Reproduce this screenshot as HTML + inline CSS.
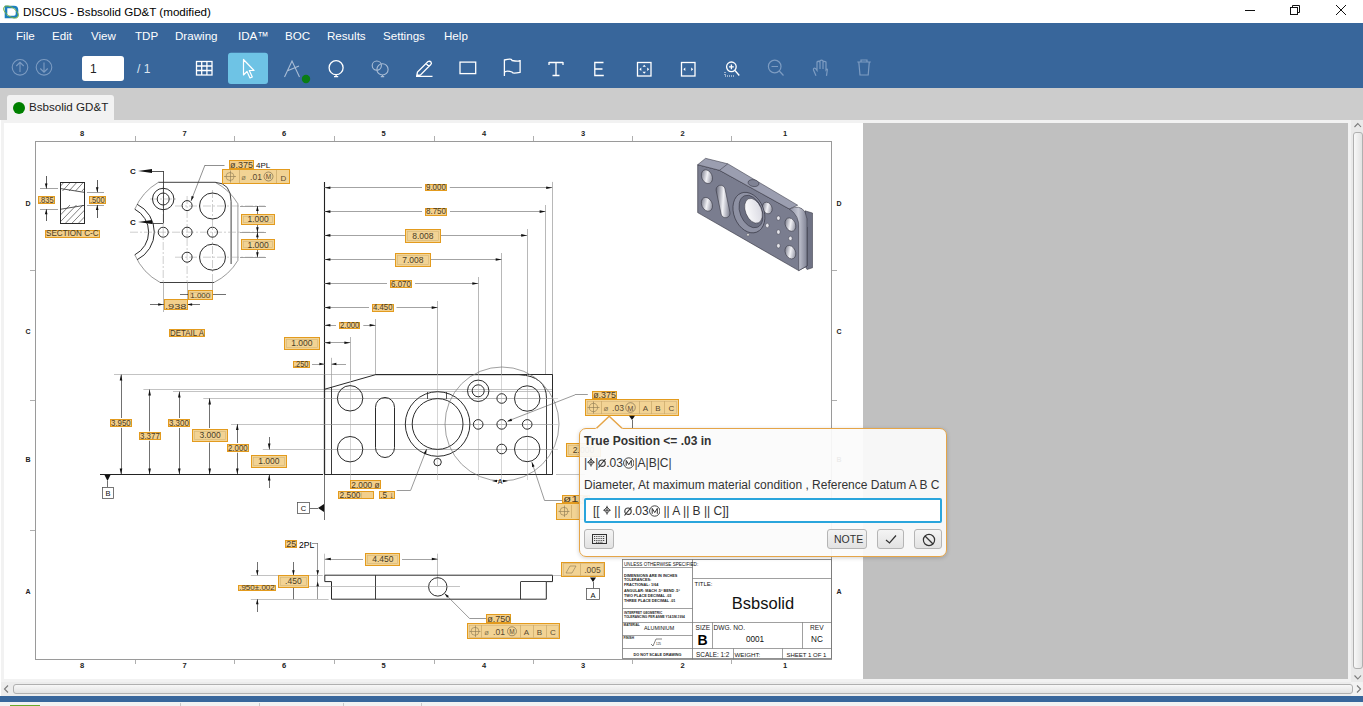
<!DOCTYPE html>
<html><head><meta charset="utf-8">
<style>
*{box-sizing:border-box;margin:0;padding:0}
html,body{width:1363px;height:706px;overflow:hidden;background:#fff;font-family:"Liberation Sans",sans-serif}
.abs{position:absolute}
#title{left:0;top:0;width:1363px;height:23px;background:#fff}
#title .t{left:23px;top:5px;font-size:11.6px;color:#000;white-space:nowrap}
#menu{left:0;top:23px;width:1363px;height:65px;background:#38669b}
.mi{position:absolute;top:6px;font-size:11.6px;color:#fff;white-space:nowrap}
#tabs{left:0;top:88px;width:1363px;height:32px;background:#cccccc}
#tab{left:7px;top:95px;width:107px;height:25px;background:#f2f2f2;border-radius:3px 3px 0 0}
#tab .d{left:6px;top:7px;width:12px;height:12px;border-radius:50%;background:#008000}
#tab .t{left:22px;top:5px;font-size:11.6px;color:#222;white-space:nowrap}
#panel{left:1px;top:120px;width:1362px;height:576px;background:#f2f2f2}
#canvas{left:4px;top:123px;width:859px;height:556px;background:#fff}
#grey{left:863px;top:123px;width:485px;height:556px;background:#c0c0c0}
#blue2{left:0;top:696px;width:1363px;height:6px;background:#38669b}
#bot{left:0;top:702px;width:1363px;height:4px;background:#f2f2f2}
#draw{left:0;top:0}
#draw text{font-family:"Liberation Sans",sans-serif}
#pop{left:579px;top:427.5px;width:368px;height:129px;background:rgba(251,251,251,0.93);border:1.5px solid #e5a548;border-radius:7px;box-shadow:0 1px 4px rgba(0,0,0,0.18)}
#pop .l1{left:4px;top:5px;font-size:12px;font-weight:bold;color:#333;white-space:nowrap}
#pop .l2{left:4px;top:27px;font-size:12px;color:#333;white-space:nowrap}
#pop .l3{left:4px;top:49px;font-size:12px;color:#333;white-space:nowrap}
#pop .inp{left:4px;top:69px;width:358px;height:25px;background:#fff;border:2px solid #2aa5dc;border-radius:2px}
#pop .inp span{position:absolute;left:7px;top:4px;font-size:12px;color:#333;white-space:nowrap}
.btn{position:absolute;top:100px;height:20px;background:linear-gradient(#f4f4f4,#e2e2e2);border:1px solid #b5b5b5;border-radius:3px}
</style></head><body>
<div id="title" class="abs">
  <svg class="abs" style="left:2px;top:3px" width="18" height="18" viewBox="0 0 18 18"><path d="M4,4 H12 Q15,4 15,7 V11 Q15,14 12,14 H4 Z" fill="none" stroke="#1d7fbf" stroke-width="2.6"/><ellipse cx="9" cy="9" rx="8.5" ry="4.5" transform="rotate(35 9 9)" fill="none" stroke="#7ab33e" stroke-width="0.9"/></svg>
  <div class="abs t">DISCUS - Bsbsolid GD&amp;T (modified)</div>
  <svg class="abs" style="left:0;top:0" width="1363" height="23" viewBox="0 0 1363 23"><g fill="none" stroke="#111" stroke-width="1">
  <path d="M1245,10.5 H1255"/>
  <rect x="1290.5" y="7.5" width="7" height="7"/>
  <path d="M1292.5,7.5 V5.5 H1299.5 V12.5 H1297.5"/>
  <path d="M1336,5 L1346,15 M1346,5 L1336,15"/>
  </g></svg>
</div>
<div id="menu" class="abs">
  <span class="mi" style="left:16px">File</span>
  <span class="mi" style="left:52px">Edit</span>
  <span class="mi" style="left:91px">View</span>
  <span class="mi" style="left:135px">TDP</span>
  <span class="mi" style="left:175px">Drawing</span>
  <span class="mi" style="left:238px">IDA™</span>
  <span class="mi" style="left:285px">BOC</span>
  <span class="mi" style="left:327px">Results</span>
  <span class="mi" style="left:383px">Settings</span>
  <span class="mi" style="left:444px">Help</span>
</div>

<svg class="abs" style="left:0;top:23px" width="1363" height="65" viewBox="0 23 1363 65">
<g fill="none" stroke="#7d9cc2" stroke-width="1.1">
 <circle cx="20" cy="67.3" r="7.8"/><path d="M20,72 V62.5 M16.3,66 L20,62.3 L23.7,66"/>
 <circle cx="44" cy="67.3" r="7.8"/><path d="M44,62.5 V72 M40.3,68.5 L44,72.2 L47.7,68.5"/>
</g>
<rect x="82" y="56" width="42" height="25" rx="3" fill="#fff"/>
<text x="90" y="73" font-size="12" fill="#222" font-family="Liberation Sans">1</text>
<text x="137" y="73" font-size="12" fill="#dde6f0" font-family="Liberation Sans">/ 1</text>
<g fill="none" stroke="#fff" stroke-width="1.3">
 <rect x="196.5" y="61.5" width="15.5" height="13.5"/>
 <path d="M196.5,66 H212 M196.5,70.5 H212 M201.7,61.5 V75 M206.9,61.5 V75"/>
</g>
<rect x="228" y="52.7" width="40" height="31.3" rx="3" fill="#6ec3e5"/>
<path d="M243.5,59.5 L243.5,75 L247,71.5 L250,78 L252.3,77 L249.3,70.5 L254,70.5 Z" fill="#6ec3e5" stroke="#fff" stroke-width="1.2" stroke-linejoin="round"/>
<g fill="none" stroke="#a9bdd6" stroke-width="1.1">
 <path d="M284.5,77 L292,61 L299.5,77 M287,71 L299,66"/>
</g>
<circle cx="306" cy="79" r="4.2" fill="#0a7d14"/>
<g fill="none" stroke="#fff" stroke-width="1.3">
 <circle cx="336.1" cy="67.7" r="7"/><path d="M336.1,74.7 V76.6 M334,76.6 H338.2"/>
</g><g fill="none" stroke="#a9bdd6" stroke-width="1.1">
 <circle cx="376.8" cy="65.6" r="4.6"/><circle cx="382.5" cy="69.4" r="5.6"/><path d="M382.5,75 V76.6 M380.8,76.6 H384.2"/>
</g><g fill="none" stroke="#fff" stroke-width="1.3">
 <rect x="460" y="62.1" width="15.7" height="11.5"/>
 <path d="M416.8,75.5 L417.5,72 L428,61.5 Q430,60.8 431,62 Q432,63.5 430.8,64.5 L420.5,75 Z M426,63.5 L429,66.5 M416,76.3 H432.5"/>
 <path d="M504.4,76 V60 Q512,58 512,60.5 Q520,62 520.1,60 V72.3 Q512,74 512,72 Q506,70 504.4,72.3"/>
 <path d="M549,62.5 H563 M549,62 V65 M563,62 V65 M556,62.5 V75.5 M552.5,75.5 H559.5"/>
 <path d="M603.5,62.5 H594.8 V75.5 H603.8 M594.8,69 H602.5"/>
 <rect x="637.5" y="62.5" width="13.5" height="13.5"/>
 <rect x="681.5" y="62.5" width="13.5" height="13.5"/>
 <circle cx="731.4" cy="66.8" r="4.8"/><path d="M729,66.8 H733.8 M731.4,64.4 V69.2 M735,70.5 L739.3,75.5"/>
</g>
<g fill="#fff"><path d="M642.5,66.8 H646 L644.2,64.8 Z M642.5,71.7 H646 L644.2,73.7 Z M641.3,67.5 V71 L639.3,69.2 Z M647.2,67.5 V71 L649.2,69.2 Z"/>
<path d="M685.3,67.5 V71 L683.3,69.2 Z M691.2,67.5 V71 L693.2,69.2 Z"/></g>
<path d="M725,76 H735 M725,72 V76" stroke="#fff" stroke-width="1" stroke-dasharray="1,1" fill="none"/>
<g fill="none" stroke="#7d9cc2" stroke-width="1.2">
 <circle cx="774.7" cy="66.5" r="6.3"/><path d="M771.5,66.5 H778 M779.3,71 L783.5,75.5"/>
 <path d="M816,75.8 L813.5,70 Q813,67.5 815.5,68.5 L817,70.5 V62 Q818.5,60.5 820,62 V69 V60.8 Q821.5,59.5 823,60.8 V69 V62 Q824.5,60.8 826,62 V70 Q827.5,68 827.3,70 L826.5,75.8"/>
 <path d="M857.3,62 H870.8 M861,62 V60 H867 V62 M858.8,62 L860,75 H868.2 L869.3,62"/>
</g>
<g fill="none" stroke="#fff" stroke-width="1"></g>
</svg>

<div id="tabs" class="abs"></div>
<div id="tab" class="abs"><div class="abs d"></div><div class="abs t">Bsbsolid GD&amp;T</div></div>
<div id="panel" class="abs"></div>
<div id="canvas" class="abs"></div>
<div id="grey" class="abs"></div>
<div class="abs" style="left:1351px;top:120px;width:12px;height:562px;background:#e9e9e9"></div>
<div class="abs" style="left:1353px;top:132px;width:9.5px;height:537px;border:1px solid #b0b0b0;border-radius:3px;background:linear-gradient(90deg,#f8f8f8,#e2e2e2)"></div>
<div class="abs" style="left:1px;top:682px;width:1350px;height:14px;background:#ececec"></div>
<div class="abs" style="left:13px;top:684px;width:1339.5px;height:9.5px;border:1px solid #b0b0b0;border-radius:3px;background:linear-gradient(#f8f8f8,#e2e2e2)"></div>
<svg class="abs" style="left:0;top:0" width="1363" height="706" viewBox="0 0 1363 706">
<g fill="none" stroke="#7a7a7a" stroke-width="1.1">
<path d="M1354.5,127 L1357.8,123.5 L1361,127"/>
<path d="M1354.5,675.5 L1357.8,679 L1361,675.5"/>
<path d="M8,685.5 L4.5,689 L8,692.5"/>
<path d="M1357,685.5 L1360.5,689 L1357,692.5"/>
</g></svg>
<div id="blue2" class="abs"></div>
<div id="bot" class="abs"></div>
<div class="abs" style="left:10px;top:705px;width:30px;height:1px;background:#6aaa2a"></div>
<div class="abs" style="left:180px;top:703px;width:1px;height:3px;background:#c8c8c8"></div>
<div class="abs" style="left:259px;top:703px;width:1px;height:3px;background:#c8c8c8"></div>
<div class="abs" style="left:343px;top:703px;width:1px;height:3px;background:#c8c8c8"></div>
<div class="abs" style="left:421px;top:703px;width:1px;height:3px;background:#c8c8c8"></div>
<svg id="draw" class="abs" width="1363" height="706" viewBox="0 0 1363 706">
<rect x="35.5" y="141.5" width="796" height="518" fill="none" stroke="#9a9a9a" stroke-width="1" rx="0"/>
<text x="82" y="136" font-size="7.5" fill="#222" text-anchor="middle" font-weight="bold" >8</text>
<text x="82" y="668" font-size="7.5" fill="#222" text-anchor="middle" font-weight="bold" >8</text>
<text x="184.7" y="136" font-size="7.5" fill="#222" text-anchor="middle" font-weight="bold" >7</text>
<text x="184.7" y="668" font-size="7.5" fill="#222" text-anchor="middle" font-weight="bold" >7</text>
<text x="284" y="136" font-size="7.5" fill="#222" text-anchor="middle" font-weight="bold" >6</text>
<text x="284" y="668" font-size="7.5" fill="#222" text-anchor="middle" font-weight="bold" >6</text>
<text x="383.5" y="136" font-size="7.5" fill="#222" text-anchor="middle" font-weight="bold" >5</text>
<text x="383.5" y="668" font-size="7.5" fill="#222" text-anchor="middle" font-weight="bold" >5</text>
<text x="484" y="136" font-size="7.5" fill="#222" text-anchor="middle" font-weight="bold" >4</text>
<text x="484" y="668" font-size="7.5" fill="#222" text-anchor="middle" font-weight="bold" >4</text>
<text x="583" y="136" font-size="7.5" fill="#222" text-anchor="middle" font-weight="bold" >3</text>
<text x="583" y="668" font-size="7.5" fill="#222" text-anchor="middle" font-weight="bold" >3</text>
<text x="682.7" y="136" font-size="7.5" fill="#222" text-anchor="middle" font-weight="bold" >2</text>
<text x="682.7" y="668" font-size="7.5" fill="#222" text-anchor="middle" font-weight="bold" >2</text>
<text x="785" y="136" font-size="7.5" fill="#222" text-anchor="middle" font-weight="bold" >1</text>
<text x="785" y="668" font-size="7.5" fill="#222" text-anchor="middle" font-weight="bold" >1</text>
<line x1="135.5" y1="136" x2="135.5" y2="141.5" stroke="#9a9a9a" stroke-width="0.8"/>
<line x1="135.5" y1="659" x2="135.5" y2="664" stroke="#9a9a9a" stroke-width="0.8"/>
<line x1="234.5" y1="136" x2="234.5" y2="141.5" stroke="#9a9a9a" stroke-width="0.8"/>
<line x1="234.5" y1="659" x2="234.5" y2="664" stroke="#9a9a9a" stroke-width="0.8"/>
<line x1="334.5" y1="136" x2="334.5" y2="141.5" stroke="#9a9a9a" stroke-width="0.8"/>
<line x1="334.5" y1="659" x2="334.5" y2="664" stroke="#9a9a9a" stroke-width="0.8"/>
<line x1="434.5" y1="136" x2="434.5" y2="141.5" stroke="#9a9a9a" stroke-width="0.8"/>
<line x1="434.5" y1="659" x2="434.5" y2="664" stroke="#9a9a9a" stroke-width="0.8"/>
<line x1="533.5" y1="136" x2="533.5" y2="141.5" stroke="#9a9a9a" stroke-width="0.8"/>
<line x1="533.5" y1="659" x2="533.5" y2="664" stroke="#9a9a9a" stroke-width="0.8"/>
<line x1="632.5" y1="136" x2="632.5" y2="141.5" stroke="#9a9a9a" stroke-width="0.8"/>
<line x1="632.5" y1="659" x2="632.5" y2="664" stroke="#9a9a9a" stroke-width="0.8"/>
<line x1="731.5" y1="136" x2="731.5" y2="141.5" stroke="#9a9a9a" stroke-width="0.8"/>
<line x1="731.5" y1="659" x2="731.5" y2="664" stroke="#9a9a9a" stroke-width="0.8"/>
<text x="28" y="206" font-size="7" fill="#222" text-anchor="middle" font-weight="bold" >D</text>
<text x="839" y="206" font-size="7" fill="#222" text-anchor="middle" font-weight="bold" >D</text>
<text x="28" y="334" font-size="7" fill="#222" text-anchor="middle" font-weight="bold" >C</text>
<text x="839" y="334" font-size="7" fill="#222" text-anchor="middle" font-weight="bold" >C</text>
<text x="28" y="462" font-size="7" fill="#222" text-anchor="middle" font-weight="bold" >B</text>
<text x="839" y="462" font-size="7" fill="#222" text-anchor="middle" font-weight="bold" >B</text>
<text x="28" y="594" font-size="7" fill="#222" text-anchor="middle" font-weight="bold" >A</text>
<text x="839" y="594" font-size="7" fill="#222" text-anchor="middle" font-weight="bold" >A</text>
<line x1="30" y1="270.5" x2="35.5" y2="270.5" stroke="#9a9a9a" stroke-width="0.8"/>
<line x1="831.5" y1="270.5" x2="837" y2="270.5" stroke="#9a9a9a" stroke-width="0.8"/>
<line x1="30" y1="400.5" x2="35.5" y2="400.5" stroke="#9a9a9a" stroke-width="0.8"/>
<line x1="831.5" y1="400.5" x2="837" y2="400.5" stroke="#9a9a9a" stroke-width="0.8"/>
<line x1="30" y1="530.5" x2="35.5" y2="530.5" stroke="#9a9a9a" stroke-width="0.8"/>
<line x1="831.5" y1="530.5" x2="837" y2="530.5" stroke="#9a9a9a" stroke-width="0.8"/>
<rect x="60.5" y="182.5" width="24" height="41" fill="none" stroke="#2a2a2a" stroke-width="1" rx="0"/>
<polyline points="60.2,188.5 84.7,192.4" fill="none" stroke="#2a2a2a" stroke-width="0.8"/>
<polyline points="60.2,209.3 84.7,205.3" fill="none" stroke="#2a2a2a" stroke-width="0.8"/>
<clipPath id="secclip"><rect x="60.2" y="182.2" width="24.5" height="41.5"/></clipPath><g clip-path="url(#secclip)">
<line x1="56.0" y1="191" x2="64.0" y2="182.2" stroke="#2a2a2a" stroke-width="0.6"/>
<line x1="52.0" y1="223.7" x2="70.0" y2="205" stroke="#2a2a2a" stroke-width="0.6"/>
<line x1="62.5" y1="191" x2="70.5" y2="182.2" stroke="#2a2a2a" stroke-width="0.6"/>
<line x1="58.5" y1="223.7" x2="76.5" y2="205" stroke="#2a2a2a" stroke-width="0.6"/>
<line x1="69.0" y1="191" x2="77.0" y2="182.2" stroke="#2a2a2a" stroke-width="0.6"/>
<line x1="65.0" y1="223.7" x2="83.0" y2="205" stroke="#2a2a2a" stroke-width="0.6"/>
<line x1="75.5" y1="191" x2="83.5" y2="182.2" stroke="#2a2a2a" stroke-width="0.6"/>
<line x1="71.5" y1="223.7" x2="89.5" y2="205" stroke="#2a2a2a" stroke-width="0.6"/>
<line x1="82.0" y1="191" x2="90.0" y2="182.2" stroke="#2a2a2a" stroke-width="0.6"/>
<line x1="78.0" y1="223.7" x2="96.0" y2="205" stroke="#2a2a2a" stroke-width="0.6"/>
<line x1="88.5" y1="191" x2="96.5" y2="182.2" stroke="#2a2a2a" stroke-width="0.6"/>
<line x1="84.5" y1="223.7" x2="102.5" y2="205" stroke="#2a2a2a" stroke-width="0.6"/>
</g>
<line x1="40" y1="188.5" x2="58" y2="188.5" stroke="#8c8c8c" stroke-width="0.8"/>
<line x1="40" y1="209.5" x2="58" y2="209.5" stroke="#8c8c8c" stroke-width="0.8"/>
<line x1="46.5" y1="176" x2="46.5" y2="188.5" stroke="#333" stroke-width="0.8"/>
<polygon points="46.2,188.5 44.900000000000006,183.5 47.5,183.5" fill="#111"/>
<line x1="46.5" y1="209.3" x2="46.5" y2="221" stroke="#333" stroke-width="0.8"/>
<polygon points="46.2,209.3 47.5,214.3 44.900000000000006,214.3" fill="#111"/>
<line x1="87" y1="192.5" x2="104" y2="192.5" stroke="#8c8c8c" stroke-width="0.8"/>
<line x1="87" y1="205.5" x2="104" y2="205.5" stroke="#8c8c8c" stroke-width="0.8"/>
<line x1="97.5" y1="180" x2="97.5" y2="192.2" stroke="#333" stroke-width="0.8"/>
<polygon points="97.2,192.2 95.9,187.2 98.5,187.2" fill="#111"/>
<line x1="97.5" y1="205" x2="97.5" y2="218" stroke="#333" stroke-width="0.8"/>
<polygon points="97.2,205 98.5,210.0 95.9,210.0" fill="#111"/>
<rect x="38.5" y="196.5" width="16" height="7" fill="#f2cf8c" stroke="#e39b1e" stroke-width="1" rx="0"/>
<text x="46.35" y="202.60000000000002" font-size="8.6" fill="#4b3b1f" text-anchor="middle" font-weight="normal" textLength="14.700000000000003" lengthAdjust="spacingAndGlyphs">.835</text>
<rect x="89.5" y="196.5" width="16" height="7" fill="#f2cf8c" stroke="#e39b1e" stroke-width="1" rx="0"/>
<text x="97.35" y="202.60000000000002" font-size="8.6" fill="#4b3b1f" text-anchor="middle" font-weight="normal" textLength="14.700000000000003" lengthAdjust="spacingAndGlyphs">.500</text>
<rect x="45.5" y="230.5" width="54" height="7" fill="#f2cf8c" stroke="#e39b1e" stroke-width="1" rx="0"/>
<text x="72.3" y="236.3" font-size="8.6" fill="#4b3b1f" text-anchor="middle" font-weight="normal" textLength="52.599999999999994" lengthAdjust="spacingAndGlyphs">SECTION C-C</text>
<path d="M158.4,182.3 A57,57 0 0 0 134.8,209.2" fill="none" stroke="#555" stroke-width="0.6"/>
<path d="M134.8,254.8 A57,57 0 0 0 160,282.4" fill="none" stroke="#555" stroke-width="0.6"/>
<path d="M215.2,182.3 A57,57 0 0 1 237.9,203.8 L237.9,260.4 A57,57 0 0 1 214.1,282.4" fill="none" stroke="#555" stroke-width="0.6"/>
<path d="M158.4,182.3 L215.2,182.3 Q231.1,183 231.1,201.5 L231.1,264" fill="none" stroke="#2a2a2a" stroke-width="0.9"/>
<line x1="160" y1="282.5" x2="214.1" y2="282.5" stroke="#2a2a2a" stroke-width="0.9"/>
<path d="M134.8,209.2 A25.7,25.7 0 0 1 134.8,254.8" fill="none" stroke="#2a2a2a" stroke-width="1"/>
<path d="M137.2,204.3 A31,31 0 0 1 137.2,259.7" fill="none" stroke="#2a2a2a" stroke-width="1"/>
<line x1="175" y1="206" x2="265" y2="206" stroke="#9a9a9a" stroke-width="0.5" stroke-dasharray="8,2,2,2"/>
<line x1="130" y1="232.2" x2="265" y2="232.2" stroke="#9a9a9a" stroke-width="0.5" stroke-dasharray="8,2,2,2"/>
<line x1="175" y1="257.2" x2="265" y2="257.2" stroke="#9a9a9a" stroke-width="0.5" stroke-dasharray="8,2,2,2"/>
<line x1="150" y1="199" x2="177" y2="199" stroke="#9a9a9a" stroke-width="0.5" stroke-dasharray="8,2,2,2"/>
<line x1="163.5" y1="282" x2="163.5" y2="312" stroke="#888" stroke-width="0.6"/>
<line x1="163.2" y1="186" x2="163.2" y2="282" stroke="#9a9a9a" stroke-width="0.5" stroke-dasharray="8,2,2,2"/>
<line x1="187.5" y1="282" x2="187.5" y2="300" stroke="#888" stroke-width="0.6"/>
<line x1="187.1" y1="196" x2="187.1" y2="282" stroke="#9a9a9a" stroke-width="0.5" stroke-dasharray="8,2,2,2"/>
<line x1="212.5" y1="282" x2="212.5" y2="300" stroke="#888" stroke-width="0.6"/>
<line x1="212.5" y1="190" x2="212.5" y2="282" stroke="#9a9a9a" stroke-width="0.5" stroke-dasharray="8,2,2,2"/>
<circle cx="163.2" cy="199" r="10.7" fill="none" stroke="#2a2a2a" stroke-width="1"/>
<circle cx="163.2" cy="199" r="6" fill="none" stroke="#2a2a2a" stroke-width="1"/>
<circle cx="187.1" cy="205.6" r="5" fill="none" stroke="#2a2a2a" stroke-width="1"/>
<circle cx="212.5" cy="206" r="13" fill="none" stroke="#2a2a2a" stroke-width="1"/>
<circle cx="163.2" cy="232.2" r="5" fill="none" stroke="#2a2a2a" stroke-width="1"/>
<circle cx="187.1" cy="232.2" r="5" fill="none" stroke="#2a2a2a" stroke-width="1"/>
<circle cx="212.5" cy="232.2" r="5" fill="none" stroke="#2a2a2a" stroke-width="1"/>
<circle cx="187.1" cy="257.2" r="5" fill="none" stroke="#2a2a2a" stroke-width="1"/>
<circle cx="212.5" cy="257.2" r="13" fill="none" stroke="#2a2a2a" stroke-width="1"/>
<text x="133" y="174" font-size="8" fill="#111" text-anchor="middle" font-weight="bold" >C</text>
<polygon points="138,171 152,169 152,173" fill="#111"/>
<line x1="152" y1="171.5" x2="163.5" y2="171.5" stroke="#2a2a2a" stroke-width="0.8"/>
<line x1="163.5" y1="171" x2="163.5" y2="223" stroke="#2a2a2a" stroke-width="0.8"/>
<text x="133" y="225" font-size="8" fill="#111" text-anchor="middle" font-weight="bold" >C</text>
<polygon points="138,222 152,220 152,224" fill="#111"/>
<line x1="152" y1="223.5" x2="163.5" y2="223.5" stroke="#2a2a2a" stroke-width="0.8"/>
<line x1="240" y1="206.5" x2="266" y2="206.5" stroke="#8c8c8c" stroke-width="0.8"/>
<line x1="240" y1="232.5" x2="266" y2="232.5" stroke="#8c8c8c" stroke-width="0.8"/>
<line x1="240" y1="257.5" x2="266" y2="257.5" stroke="#8c8c8c" stroke-width="0.8"/>
<line x1="257.5" y1="206" x2="257.5" y2="257.2" stroke="#333" stroke-width="0.7"/>
<polygon points="257.4,206 258.7,211.0 256.09999999999997,211.0" fill="#111"/>
<polygon points="257.4,232.2 256.09999999999997,227.2 258.7,227.2" fill="#111"/>
<polygon points="257.4,232.2 258.7,237.2 256.09999999999997,237.2" fill="#111"/>
<polygon points="257.4,257.2 256.09999999999997,252.2 258.7,252.2" fill="#111"/>
<rect x="241.5" y="214.5" width="33" height="10" fill="#f2d394" stroke="#e39b1e" stroke-width="1" rx="0"/>
<rect x="243.5" y="216.5" width="29" height="6" fill="none" stroke="#d9b97a" stroke-width="0.7" rx="0"/>
<text x="258.1" y="222.3" font-size="8.5" fill="#4a3d25" text-anchor="middle" font-weight="normal" >1.000</text>
<rect x="241.5" y="239.5" width="33" height="10" fill="#f2d394" stroke="#e39b1e" stroke-width="1" rx="0"/>
<rect x="243.5" y="241.5" width="29" height="6" fill="none" stroke="#d9b97a" stroke-width="0.7" rx="0"/>
<text x="258.1" y="247.6" font-size="8.5" fill="#4a3d25" text-anchor="middle" font-weight="normal" >1.000</text>
<line x1="180" y1="294.5" x2="226" y2="294.5" stroke="#333" stroke-width="0.7"/>
<polygon points="187.1,294.5 192.1,293.2 192.1,295.8" fill="#111"/>
<polygon points="212.5,294.5 207.5,295.8 207.5,293.2" fill="#111"/>
<line x1="150" y1="304.5" x2="200" y2="304.5" stroke="#333" stroke-width="0.7"/>
<polygon points="163.2,304.5 158.2,305.8 158.2,303.2" fill="#111"/>
<polygon points="187.1,304.5 192.1,303.2 192.1,305.8" fill="#111"/>
<rect x="188.5" y="290.5" width="24" height="9" fill="#f2d394" stroke="#e39b1e" stroke-width="1" rx="0"/>
<rect x="190.5" y="292.5" width="20" height="5" fill="none" stroke="#d9b97a" stroke-width="0.7" rx="0"/>
<text x="200.25" y="297.75" font-size="8" fill="#4a3d25" text-anchor="middle" font-weight="normal" >1.000</text>
<rect x="164.5" y="299.5" width="23" height="10" fill="#f2cf8c" stroke="#e39b1e" stroke-width="1" rx="0"/>
<text x="175.75" y="308.8" font-size="8" fill="#4b3b1f" text-anchor="middle" font-weight="normal" textLength="21.5" lengthAdjust="spacingAndGlyphs">.938</text>
<rect x="169.5" y="329.5" width="35" height="7" fill="#f2cf8c" stroke="#e39b1e" stroke-width="1" rx="0"/>
<text x="187.0" y="335.8" font-size="8.6" fill="#4b3b1f" text-anchor="middle" font-weight="normal" textLength="34" lengthAdjust="spacingAndGlyphs">DETAIL A</text>
<line x1="224.5" y1="165.5" x2="205" y2="165.5" stroke="#444" stroke-width="0.6"/>
<line x1="205" y1="165" x2="191" y2="201" stroke="#444" stroke-width="0.6"/>
<polygon points="191,201 191.591,195.882 194.00900000000001,196.81799999999998" fill="#111"/>
<rect x="229.5" y="160.5" width="24" height="8" fill="#f2cf8c" stroke="#e39b1e" stroke-width="1" rx="0"/>
<text x="241.5" y="167.8" font-size="8.6" fill="#4b3b1f" text-anchor="middle" font-weight="normal" textLength="23" lengthAdjust="spacingAndGlyphs">ø.375</text>
<text x="256" y="168" font-size="8" fill="#111" text-anchor="start" font-weight="normal" >4PL</text>
<rect x="222.5" y="169.5" width="67" height="14" fill="#f2d394" stroke="#e39b1e" stroke-width="1" rx="0"/>
<line x1="239.5" y1="170" x2="239.5" y2="183" stroke="#c9a868" stroke-width="0.7"/>
<line x1="276.5" y1="170" x2="276.5" y2="183" stroke="#c9a868" stroke-width="0.7"/>
<circle cx="230" cy="176.5" r="4" fill="none" stroke="#8a7750" stroke-width="0.6"/>
<line x1="224" y1="176.5" x2="236" y2="176.5" stroke="#8a7750" stroke-width="0.6"/>
<line x1="230.5" y1="170.5" x2="230.5" y2="182.5" stroke="#8a7750" stroke-width="0.6"/>
<text x="243.5" y="180" font-size="7.5" fill="#8a7750" text-anchor="middle" font-weight="normal" >ø</text>
<text x="256" y="180" font-size="8.5" fill="#5a4a30" text-anchor="middle" font-weight="normal" >.01</text>
<circle cx="268.5" cy="176.5" r="4.5" fill="none" stroke="#6a5a40" stroke-width="0.6"/>
<text x="268.5" y="179.3" font-size="6.5" fill="#5a4a30" text-anchor="middle" font-weight="normal" >M</text>
<text x="283.5" y="180.5" font-size="8" fill="#5a4a30" text-anchor="middle" font-weight="normal" >D</text>
<line x1="324.5" y1="181.9" x2="324.5" y2="474.4" stroke="#222" stroke-width="1.1"/>
<line x1="552.5" y1="181.9" x2="552.5" y2="375" stroke="#9a9a9a" stroke-width="0.7"/>
<line x1="324.4" y1="187.5" x2="422" y2="187.5" stroke="#8c8c8c" stroke-width="0.8"/>
<line x1="449.8" y1="187.5" x2="552.2" y2="187.5" stroke="#8c8c8c" stroke-width="0.8"/>
<rect x="425.5" y="184.5" width="21" height="6" fill="#f2cf8c" stroke="#e39b1e" stroke-width="1" rx="0"/>
<text x="435.9" y="190.20000000000002" font-size="8.164999999999992" fill="#4b3b1f" text-anchor="middle" font-weight="normal" textLength="19.80000000000001" lengthAdjust="spacingAndGlyphs">9.000</text>
<polygon points="324.4,187.8 330.4,186.5 330.4,189.10000000000002" fill="#111"/>
<polygon points="552.2,187.8 546.2,189.10000000000002 546.2,186.5" fill="#111"/>
<line x1="545.5" y1="205" x2="545.5" y2="375" stroke="#9a9a9a" stroke-width="0.7"/>
<line x1="324.4" y1="211.5" x2="422" y2="211.5" stroke="#8c8c8c" stroke-width="0.8"/>
<line x1="450" y1="211.5" x2="545.6" y2="211.5" stroke="#8c8c8c" stroke-width="0.8"/>
<rect x="425.5" y="208.5" width="21" height="7" fill="#f2cf8c" stroke="#e39b1e" stroke-width="1" rx="0"/>
<text x="436.0" y="214.3" font-size="8.6" fill="#4b3b1f" text-anchor="middle" font-weight="normal" textLength="20" lengthAdjust="spacingAndGlyphs">8.750</text>
<polygon points="324.4,211.6 330.4,210.29999999999998 330.4,212.9" fill="#111"/>
<polygon points="545.6,211.6 539.6,212.9 539.6,210.29999999999998" fill="#111"/>
<line x1="527.5" y1="229" x2="527.5" y2="375" stroke="#9a9a9a" stroke-width="0.7"/>
<line x1="324.4" y1="235.5" x2="405" y2="235.5" stroke="#8c8c8c" stroke-width="0.8"/>
<line x1="440.6" y1="235.5" x2="527.2" y2="235.5" stroke="#8c8c8c" stroke-width="0.8"/>
<rect x="405.5" y="229.5" width="35" height="13" fill="#f2d394" stroke="#e39b1e" stroke-width="1" rx="0"/>
<rect x="407.5" y="231.5" width="31" height="9" fill="none" stroke="#d9b97a" stroke-width="0.7" rx="0"/>
<text x="422.8" y="238.85" font-size="8.5" fill="#4a3d25" text-anchor="middle" font-weight="normal" >8.008</text>
<polygon points="324.4,235.4 330.4,234.1 330.4,236.70000000000002" fill="#111"/>
<polygon points="527.2,235.4 521.2,236.70000000000002 521.2,234.1" fill="#111"/>
<line x1="501.5" y1="253" x2="501.5" y2="375" stroke="#9a9a9a" stroke-width="0.7"/>
<line x1="324.4" y1="259.5" x2="395" y2="259.5" stroke="#8c8c8c" stroke-width="0.8"/>
<line x1="430.7" y1="259.5" x2="501.7" y2="259.5" stroke="#8c8c8c" stroke-width="0.8"/>
<rect x="395.5" y="253.5" width="35" height="13" fill="#f2d394" stroke="#e39b1e" stroke-width="1" rx="0"/>
<rect x="397.5" y="255.5" width="31" height="9" fill="none" stroke="#d9b97a" stroke-width="0.7" rx="0"/>
<text x="412.85" y="262.95" font-size="8.5" fill="#4a3d25" text-anchor="middle" font-weight="normal" >7.008</text>
<polygon points="324.4,259.5 330.4,258.2 330.4,260.8" fill="#111"/>
<polygon points="501.7,259.5 495.7,260.8 495.7,258.2" fill="#111"/>
<line x1="478.5" y1="277" x2="478.5" y2="375" stroke="#9a9a9a" stroke-width="0.7"/>
<line x1="324.4" y1="283.5" x2="387" y2="283.5" stroke="#8c8c8c" stroke-width="0.8"/>
<line x1="415" y1="283.5" x2="478.3" y2="283.5" stroke="#8c8c8c" stroke-width="0.8"/>
<rect x="390.5" y="280.5" width="21" height="7" fill="#f2cf8c" stroke="#e39b1e" stroke-width="1" rx="0"/>
<text x="401.0" y="286.6" font-size="8.6" fill="#4b3b1f" text-anchor="middle" font-weight="normal" textLength="20" lengthAdjust="spacingAndGlyphs">6.070</text>
<polygon points="324.4,283.5 330.4,282.2 330.4,284.8" fill="#111"/>
<polygon points="478.3,283.5 472.3,284.8 472.3,282.2" fill="#111"/>
<line x1="437.5" y1="301" x2="437.5" y2="375" stroke="#9a9a9a" stroke-width="0.7"/>
<line x1="324.4" y1="307.5" x2="369" y2="307.5" stroke="#8c8c8c" stroke-width="0.8"/>
<line x1="396.5" y1="307.5" x2="437.7" y2="307.5" stroke="#8c8c8c" stroke-width="0.8"/>
<rect x="372.5" y="304.5" width="21" height="7" fill="#f2cf8c" stroke="#e39b1e" stroke-width="1" rx="0"/>
<text x="382.75" y="310.40000000000003" font-size="8.6" fill="#4b3b1f" text-anchor="middle" font-weight="normal" textLength="19.5" lengthAdjust="spacingAndGlyphs">4.450</text>
<polygon points="324.4,307.6 330.4,306.3 330.4,308.90000000000003" fill="#111"/>
<polygon points="437.7,307.6 431.7,308.90000000000003 431.7,306.3" fill="#111"/>
<line x1="375.5" y1="319" x2="375.5" y2="375" stroke="#9a9a9a" stroke-width="0.7"/>
<line x1="324.4" y1="325.5" x2="336" y2="325.5" stroke="#8c8c8c" stroke-width="0.8"/>
<line x1="363.3" y1="325.5" x2="375.6" y2="325.5" stroke="#8c8c8c" stroke-width="0.8"/>
<rect x="339.5" y="322.5" width="20" height="6" fill="#f2cf8c" stroke="#e39b1e" stroke-width="1" rx="0"/>
<text x="349.65" y="328.2" font-size="8.6" fill="#4b3b1f" text-anchor="middle" font-weight="normal" textLength="19.30000000000001" lengthAdjust="spacingAndGlyphs">2.000</text>
<polygon points="324.4,325.2 330.4,323.9 330.4,326.5" fill="#111"/>
<polygon points="375.6,325.2 369.6,326.5 369.6,323.9" fill="#111"/>
<line x1="350.5" y1="337" x2="350.5" y2="380" stroke="#9a9a9a" stroke-width="0.7"/>
<line x1="324.4" y1="342.5" x2="350.4" y2="342.5" stroke="#8c8c8c" stroke-width="0.8"/>
<polygon points="324.4,342.7 330.4,341.4 330.4,344.0" fill="#111"/>
<polygon points="350.4,342.7 344.4,344.0 344.4,341.4" fill="#111"/>
<rect x="284.5" y="337.5" width="35" height="12" fill="#f2d394" stroke="#e39b1e" stroke-width="1" rx="0"/>
<rect x="286.5" y="339.5" width="31" height="8" fill="none" stroke="#d9b97a" stroke-width="0.7" rx="0"/>
<text x="301.85" y="346.45" font-size="8.5" fill="#4a3d25" text-anchor="middle" font-weight="normal" >1.000</text>
<line x1="331.5" y1="357.8" x2="331.5" y2="474.4" stroke="#888" stroke-width="0.6"/>
<line x1="312" y1="364.5" x2="324.4" y2="364.5" stroke="#8c8c8c" stroke-width="0.8"/>
<polygon points="324.4,364 319.4,365.3 319.4,362.7" fill="#111"/>
<line x1="331.4" y1="364.5" x2="346" y2="364.5" stroke="#8c8c8c" stroke-width="0.8"/>
<polygon points="331.4,364 336.4,362.7 336.4,365.3" fill="#111"/>
<rect x="293.5" y="361.5" width="16" height="6" fill="#f2cf8c" stroke="#e39b1e" stroke-width="1" rx="0"/>
<text x="301.25" y="367.0" font-size="8.509999999999973" fill="#4b3b1f" text-anchor="middle" font-weight="normal" textLength="14.5" lengthAdjust="spacingAndGlyphs">.250</text>
<line x1="100" y1="474.5" x2="323" y2="474.5" stroke="#222" stroke-width="1.2"/>
<line x1="114" y1="374.5" x2="553" y2="374.5" stroke="#9a9a9a" stroke-width="0.6"/>
<line x1="121.5" y1="374.6" x2="121.5" y2="418" stroke="#333" stroke-width="0.7"/>
<line x1="121.5" y1="427.9" x2="121.5" y2="474.4" stroke="#333" stroke-width="0.7"/>
<polygon points="121,374.6 122.3,380.6 119.7,380.6" fill="#111"/>
<polygon points="121,474.4 119.7,468.4 122.3,468.4" fill="#111"/>
<rect x="110.5" y="419.5" width="21" height="7" fill="#f2cf8c" stroke="#e39b1e" stroke-width="1" rx="0"/>
<text x="120.85" y="425.7" font-size="8.6" fill="#4b3b1f" text-anchor="middle" font-weight="normal" textLength="19.69999999999999" lengthAdjust="spacingAndGlyphs">3.950</text>
<line x1="143.4" y1="389.5" x2="553" y2="389.5" stroke="#9a9a9a" stroke-width="0.6"/>
<line x1="149.5" y1="389.5" x2="149.5" y2="431.4" stroke="#333" stroke-width="0.7"/>
<line x1="149.5" y1="440.8" x2="149.5" y2="474.4" stroke="#333" stroke-width="0.7"/>
<polygon points="149.6,389.5 150.9,395.5 148.29999999999998,395.5" fill="#111"/>
<polygon points="149.6,474.4 148.29999999999998,468.4 150.9,468.4" fill="#111"/>
<rect x="139.5" y="432.5" width="21" height="7" fill="#f2cf8c" stroke="#e39b1e" stroke-width="1" rx="0"/>
<text x="149.9" y="438.6" font-size="8.510000000000039" fill="#4b3b1f" text-anchor="middle" font-weight="normal" textLength="19.80000000000001" lengthAdjust="spacingAndGlyphs">3.377</text>
<line x1="173" y1="391.5" x2="553" y2="391.5" stroke="#9a9a9a" stroke-width="0.6"/>
<line x1="179.5" y1="391.6" x2="179.5" y2="418" stroke="#333" stroke-width="0.7"/>
<line x1="179.5" y1="428" x2="179.5" y2="474.4" stroke="#333" stroke-width="0.7"/>
<polygon points="179.3,391.6 180.60000000000002,397.6 178.0,397.6" fill="#111"/>
<polygon points="179.3,474.4 178.0,468.4 180.60000000000002,468.4" fill="#111"/>
<rect x="168.5" y="419.5" width="21" height="7" fill="#f2cf8c" stroke="#e39b1e" stroke-width="1" rx="0"/>
<text x="178.95" y="425.8" font-size="8.6" fill="#4b3b1f" text-anchor="middle" font-weight="normal" textLength="20.099999999999994" lengthAdjust="spacingAndGlyphs">3.300</text>
<line x1="203.3" y1="398.5" x2="553" y2="398.5" stroke="#9a9a9a" stroke-width="0.6"/>
<line x1="209.5" y1="398.4" x2="209.5" y2="428" stroke="#333" stroke-width="0.7"/>
<line x1="209.5" y1="442.5" x2="209.5" y2="474.4" stroke="#333" stroke-width="0.7"/>
<polygon points="209.7,398.4 211.0,404.4 208.39999999999998,404.4" fill="#111"/>
<polygon points="209.7,474.4 208.39999999999998,468.4 211.0,468.4" fill="#111"/>
<rect x="192.5" y="429.5" width="35" height="12" fill="#f2d394" stroke="#e39b1e" stroke-width="1" rx="0"/>
<rect x="194.5" y="431.5" width="31" height="8" fill="none" stroke="#d9b97a" stroke-width="0.7" rx="0"/>
<text x="210.05" y="438.25" font-size="8.5" fill="#4a3d25" text-anchor="middle" font-weight="normal" >3.000</text>
<line x1="231" y1="424.5" x2="553" y2="424.5" stroke="#9a9a9a" stroke-width="0.6"/>
<line x1="237.5" y1="424.1" x2="237.5" y2="443" stroke="#333" stroke-width="0.7"/>
<line x1="237.5" y1="452.7" x2="237.5" y2="474.4" stroke="#333" stroke-width="0.7"/>
<polygon points="237.3,424.1 238.60000000000002,430.1 236.0,430.1" fill="#111"/>
<polygon points="237.3,474.4 236.0,468.4 238.60000000000002,468.4" fill="#111"/>
<rect x="227.5" y="444.5" width="21" height="7" fill="#f2cf8c" stroke="#e39b1e" stroke-width="1" rx="0"/>
<text x="237.8" y="450.5" font-size="8.6" fill="#4b3b1f" text-anchor="middle" font-weight="normal" textLength="19.599999999999994" lengthAdjust="spacingAndGlyphs">2.000</text>
<line x1="262.8" y1="449.5" x2="553" y2="449.5" stroke="#9a9a9a" stroke-width="0.6"/>
<line x1="269.5" y1="437" x2="269.5" y2="449.4" stroke="#333" stroke-width="0.7"/>
<polygon points="269.2,449.4 267.9,443.4 270.5,443.4" fill="#111"/>
<line x1="269.5" y1="474.4" x2="269.5" y2="488" stroke="#333" stroke-width="0.7"/>
<polygon points="269.2,474.4 270.5,480.4 267.9,480.4" fill="#111"/>
<rect x="251.5" y="455.5" width="35" height="12" fill="#f2d394" stroke="#e39b1e" stroke-width="1" rx="0"/>
<rect x="253.5" y="457.5" width="31" height="8" fill="none" stroke="#d9b97a" stroke-width="0.7" rx="0"/>
<text x="268.9" y="464.45000000000005" font-size="8.5" fill="#4a3d25" text-anchor="middle" font-weight="normal" >1.000</text>
<polygon points="104.5,475 110.5,475 107.5,481" fill="#111"/>
<line x1="107.5" y1="481" x2="107.5" y2="487" stroke="#333" stroke-width="0.7"/>
<rect x="102.5" y="487.5" width="11" height="11" fill="#fff" stroke="#555" stroke-width="0.8" rx="0"/>
<text x="108" y="496" font-size="7.5" fill="#111" text-anchor="middle" font-weight="normal" >B</text>
<path d="M324.4,389.3 L375.5,374.7 L519,374.7 Q546.5,376 546.5,398.4" fill="none" stroke="#2a2a2a" stroke-width="1"/>
<line x1="324.5" y1="374.7" x2="324.5" y2="474.4" stroke="#2a2a2a" stroke-width="1.2"/>
<line x1="331.5" y1="387" x2="331.5" y2="474.4" stroke="#2a2a2a" stroke-width="0.9"/>
<line x1="324.4" y1="474.5" x2="552.7" y2="474.5" stroke="#2a2a2a" stroke-width="1"/>
<line x1="375.5" y1="374.5" x2="552.7" y2="374.5" stroke="#2a2a2a" stroke-width="1"/>
<line x1="552.5" y1="374.7" x2="552.5" y2="474.4" stroke="#2a2a2a" stroke-width="1"/>
<line x1="546.5" y1="398.4" x2="546.5" y2="474.4" stroke="#2a2a2a" stroke-width="0.9"/>
<line x1="320" y1="398.5" x2="558" y2="398.5" stroke="#aaa" stroke-width="0.5"/>
<line x1="320" y1="424.5" x2="558" y2="424.5" stroke="#aaa" stroke-width="0.5"/>
<line x1="320" y1="449.5" x2="558" y2="449.5" stroke="#aaa" stroke-width="0.5"/>
<line x1="462" y1="391.5" x2="494" y2="391.5" stroke="#aaa" stroke-width="0.5"/>
<line x1="350.5" y1="370" x2="350.5" y2="480" stroke="#aaa" stroke-width="0.5"/>
<line x1="437.5" y1="370" x2="437.5" y2="480" stroke="#aaa" stroke-width="0.5"/>
<line x1="478.5" y1="370" x2="478.5" y2="480" stroke="#aaa" stroke-width="0.5"/>
<line x1="501.5" y1="370" x2="501.5" y2="480" stroke="#aaa" stroke-width="0.5"/>
<line x1="527.5" y1="370" x2="527.5" y2="480" stroke="#aaa" stroke-width="0.5"/>
<circle cx="350.1" cy="398.3" r="12.7" fill="none" stroke="#2a2a2a" stroke-width="1"/>
<circle cx="350.1" cy="449.2" r="12.7" fill="none" stroke="#2a2a2a" stroke-width="1"/>
<rect x="375.5" y="397.5" width="19" height="60" fill="none" stroke="#2a2a2a" stroke-width="1" rx="9.85"/>
<circle cx="437.6" cy="424" r="32.3" fill="none" stroke="#2a2a2a" stroke-width="1"/>
<circle cx="437.6" cy="424" r="25.4" fill="none" stroke="#2a2a2a" stroke-width="1"/>
<line x1="427.5" y1="392" x2="427.5" y2="399" stroke="#2a2a2a" stroke-width="0.8"/>
<line x1="446.5" y1="392" x2="446.5" y2="399" stroke="#2a2a2a" stroke-width="0.8"/>
<circle cx="437.6" cy="462.1" r="3.7" fill="none" stroke="#2a2a2a" stroke-width="1"/>
<circle cx="502" cy="424" r="57" fill="none" stroke="#777" stroke-width="0.7"/>
<circle cx="478.2" cy="390.8" r="10.7" fill="none" stroke="#2a2a2a" stroke-width="1"/>
<circle cx="478.2" cy="390.8" r="6" fill="none" stroke="#2a2a2a" stroke-width="1"/>
<circle cx="501.7" cy="398.5" r="4.8" fill="none" stroke="#2a2a2a" stroke-width="1"/>
<circle cx="478.2" cy="424.4" r="4.8" fill="none" stroke="#2a2a2a" stroke-width="1"/>
<circle cx="501.7" cy="424.4" r="4.8" fill="none" stroke="#2a2a2a" stroke-width="1"/>
<circle cx="527.2" cy="424.4" r="4.8" fill="none" stroke="#2a2a2a" stroke-width="1"/>
<circle cx="501.7" cy="449" r="4.8" fill="none" stroke="#2a2a2a" stroke-width="1"/>
<circle cx="527.2" cy="398.5" r="12.7" fill="none" stroke="#2a2a2a" stroke-width="1"/>
<circle cx="527.2" cy="449" r="12.7" fill="none" stroke="#2a2a2a" stroke-width="1"/>
<line x1="587.8" y1="394.5" x2="575" y2="394.5" stroke="#555" stroke-width="0.6"/>
<line x1="575" y1="394.9" x2="508" y2="421" stroke="#555" stroke-width="0.6"/>
<polygon points="507,421.5 511.18199999999996,418.491 512.1179999999999,420.909" fill="#111"/>
<line x1="531.8" y1="462" x2="544.5" y2="500.4" stroke="#555" stroke-width="0.6"/>
<line x1="544.5" y1="500.5" x2="566" y2="500.5" stroke="#555" stroke-width="0.6"/>
<polygon points="531.8,462 534.5849999999999,466.347 532.1149999999999,467.153" fill="#111"/>
<line x1="426.7" y1="449" x2="410.7" y2="490.2" stroke="#555" stroke-width="0.6"/>
<line x1="410.7" y1="490.5" x2="396.7" y2="490.5" stroke="#555" stroke-width="0.6"/>
<polygon points="426.7,449 426.109,454.118 423.691,453.18199999999996" fill="#111"/>
<text x="500" y="484" font-size="7" fill="#111" text-anchor="middle" font-weight="normal" >A</text>
<polygon points="492,481 497.0,479.8 497.0,482.2" fill="#111"/>
<polygon points="508,481 503.0,482.2 503.0,479.8" fill="#111"/>
<rect x="350.5" y="480.5" width="30" height="8" fill="#f2cf8c" stroke="#e39b1e" stroke-width="1" rx="0"/>
<text x="365.45000000000005" y="488.0" font-size="8.6" fill="#4b3b1f" text-anchor="middle" font-weight="normal" textLength="28.30000000000001" lengthAdjust="spacingAndGlyphs">2.000 ø</text>
<rect x="338.5" y="491.5" width="35" height="7" fill="#f2cf8c" stroke="#e39b1e" stroke-width="1" rx="0"/>
<text x="339.5" y="498.3" font-size="8.4" fill="#4b3b1f" text-anchor="start" font-weight="normal" >2.500</text>
<line x1="361.5" y1="492.5" x2="361.5" y2="498" stroke="#c9a868" stroke-width="0.6"/>
<rect x="379.5" y="491.5" width="15" height="7" fill="#f2cf8c" stroke="#e39b1e" stroke-width="1" rx="0"/>
<text x="386.95000000000005" y="498.2" font-size="8.6" fill="#4b3b1f" text-anchor="middle" font-weight="normal" textLength="13.300000000000011" lengthAdjust="spacingAndGlyphs">.5 ↓</text>
<line x1="324.5" y1="474.4" x2="324.5" y2="520" stroke="#333" stroke-width="0.7"/>
<polygon points="318,508 324,504 324,512" fill="#111"/>
<line x1="310" y1="508.5" x2="318" y2="508.5" stroke="#333" stroke-width="0.7"/>
<rect x="297.5" y="502.5" width="12" height="11" fill="#fff" stroke="#555" stroke-width="0.8" rx="0"/>
<text x="303.5" y="511" font-size="7.5" fill="#111" text-anchor="middle" font-weight="normal" >C</text>
<rect x="566.5" y="443.5" width="34" height="13" fill="#f2d394" stroke="#e39b1e" stroke-width="1" rx="0"/>
<rect x="568.5" y="445.5" width="30" height="9" fill="none" stroke="#d9b97a" stroke-width="0.7" rx="0"/>
<text x="583.5" y="452.8" font-size="8.5" fill="#4a3d25" text-anchor="middle" font-weight="normal" >2.000</text>
<line x1="556" y1="474.5" x2="585" y2="474.5" stroke="#999" stroke-width="0.6"/>
<rect x="562.5" y="495.5" width="27" height="7" fill="#f2cf8c" stroke="#e39b1e" stroke-width="1" rx="0"/>
<text x="576.15" y="502.0" font-size="8.6" fill="#4b3b1f" text-anchor="middle" font-weight="normal" textLength="25.700000000000045" lengthAdjust="spacingAndGlyphs">ø1.0</text>
<rect x="556.5" y="503.5" width="39" height="16" fill="#f2d394" stroke="#e39b1e" stroke-width="1" rx="0"/>
<line x1="571.5" y1="505" x2="571.5" y2="518" stroke="#c9a868" stroke-width="0.7"/>
<circle cx="564" cy="511.3" r="4" fill="none" stroke="#8a7750" stroke-width="0.6"/>
<line x1="558.5" y1="511.5" x2="569.5" y2="511.5" stroke="#8a7750" stroke-width="0.6"/>
<line x1="564.5" y1="505.5" x2="564.5" y2="517" stroke="#8a7750" stroke-width="0.6"/>
<rect x="592.5" y="391.5" width="24" height="7" fill="#f2cf8c" stroke="#e39b1e" stroke-width="1" rx="0"/>
<text x="604.55" y="398.1" font-size="8.6" fill="#4b3b1f" text-anchor="middle" font-weight="normal" textLength="22.699999999999932" lengthAdjust="spacingAndGlyphs">ø.375</text>
<rect x="585.5" y="399.5" width="93" height="16" fill="#f2d394" stroke="#e39b1e" stroke-width="1" rx="0"/>
<rect x="587.5" y="401.5" width="89" height="12" fill="none" stroke="#d2b27a" stroke-width="0.6" rx="0"/>
<line x1="601.5" y1="401" x2="601.5" y2="414" stroke="#c9a868" stroke-width="0.7"/>
<line x1="639.5" y1="401" x2="639.5" y2="414" stroke="#c9a868" stroke-width="0.7"/>
<line x1="651.5" y1="401" x2="651.5" y2="414" stroke="#c9a868" stroke-width="0.7"/>
<line x1="664.5" y1="401" x2="664.5" y2="414" stroke="#c9a868" stroke-width="0.7"/>
<circle cx="593.4" cy="407.5" r="4.2" fill="none" stroke="#8a7750" stroke-width="0.6"/>
<line x1="587.5" y1="407.5" x2="599.5" y2="407.5" stroke="#8a7750" stroke-width="0.6"/>
<line x1="593.5" y1="401.5" x2="593.5" y2="413.5" stroke="#8a7750" stroke-width="0.6"/>
<text x="606" y="411" font-size="8" fill="#8a7750" text-anchor="middle" font-weight="normal" >ø</text>
<text x="618" y="411" font-size="8.5" fill="#5a4a30" text-anchor="middle" font-weight="normal" >.03</text>
<circle cx="630.5" cy="407.5" r="4.8" fill="none" stroke="#6a5a40" stroke-width="0.6"/>
<text x="630.5" y="410.5" font-size="7" fill="#5a4a30" text-anchor="middle" font-weight="normal" >M</text>
<text x="645.3" y="411" font-size="8" fill="#5a4a30" text-anchor="middle" font-weight="normal" >A</text>
<text x="658" y="411" font-size="8" fill="#5a4a30" text-anchor="middle" font-weight="normal" >B</text>
<text x="671.5" y="411" font-size="8" fill="#5a4a30" text-anchor="middle" font-weight="normal" >C</text>
<polygon points="629,415.8 635,415.8 632,420" fill="#111"/>
<line x1="632.5" y1="420" x2="632.5" y2="428" stroke="#333" stroke-width="0.7"/>
<rect x="285.5" y="540.5" width="11" height="7" fill="#f2cf8c" stroke="#e39b1e" stroke-width="1" rx="0"/>
<text x="291.2" y="546.6999999999999" font-size="8.509999999999973" fill="#4b3b1f" text-anchor="middle" font-weight="normal" textLength="10.0" lengthAdjust="spacingAndGlyphs">25</text>
<text x="299" y="547.8" font-size="8.6" fill="#000" text-anchor="start" font-weight="normal" >2PL</text>
<line x1="312" y1="543.5" x2="317.7" y2="543.5" stroke="#555" stroke-width="0.6"/>
<line x1="317.5" y1="543" x2="317.5" y2="599" stroke="#555" stroke-width="0.6"/>
<polygon points="317.7,575.2 316.4,570.2 319.0,570.2" fill="#111"/>
<polygon points="317.7,581.6 319.0,586.6 316.4,586.6" fill="#111"/>
<line x1="324.5" y1="553.7" x2="324.5" y2="575.2" stroke="#999" stroke-width="0.6"/>
<line x1="437.5" y1="553.7" x2="437.5" y2="586" stroke="#999" stroke-width="0.6"/>
<line x1="324.8" y1="559.5" x2="363" y2="559.5" stroke="#8c8c8c" stroke-width="0.8"/>
<line x1="402" y1="559.5" x2="437.8" y2="559.5" stroke="#8c8c8c" stroke-width="0.8"/>
<polygon points="324.8,559 330.8,557.7 330.8,560.3" fill="#111"/>
<polygon points="437.8,559 431.8,560.3 431.8,557.7" fill="#111"/>
<rect x="365.5" y="553.5" width="34" height="12" fill="#f2d394" stroke="#e39b1e" stroke-width="1" rx="0"/>
<rect x="367.5" y="555.5" width="30" height="8" fill="none" stroke="#d9b97a" stroke-width="0.7" rx="0"/>
<text x="382.9" y="562.35" font-size="8.5" fill="#4a3d25" text-anchor="middle" font-weight="normal" >4.450</text>
<path d="M324.8,575.2 L552.5,575.2 L552.5,581.6 L546.3,581.6 L546.3,599.2 L331.5,599.2 L331.5,581.6 L324.8,581.6 Z" fill="none" stroke="#2a2a2a" stroke-width="1"/>
<line x1="375.5" y1="575.2" x2="375.5" y2="599.2" stroke="#2a2a2a" stroke-width="0.9"/>
<line x1="520.5" y1="581.6" x2="520.5" y2="599.2" stroke="#2a2a2a" stroke-width="0.9"/>
<line x1="520.8" y1="581.5" x2="546.3" y2="581.5" stroke="#2a2a2a" stroke-width="0.9"/>
<circle cx="437.8" cy="586.9" r="9.2" fill="none" stroke="#2a2a2a" stroke-width="1"/>
<line x1="290" y1="586.5" x2="460" y2="586.5" stroke="#888" stroke-width="0.5"/>
<line x1="250.8" y1="575.5" x2="322.7" y2="575.5" stroke="#999" stroke-width="0.6"/>
<line x1="250.8" y1="599.5" x2="328.6" y2="599.5" stroke="#999" stroke-width="0.6"/>
<line x1="257.5" y1="562" x2="257.5" y2="575.2" stroke="#333" stroke-width="0.7"/>
<polygon points="257.3,575.2 256.0,570.2 258.6,570.2" fill="#111"/>
<line x1="257.5" y1="599.2" x2="257.5" y2="612" stroke="#333" stroke-width="0.7"/>
<polygon points="257.3,599.2 258.6,604.2 256.0,604.2" fill="#111"/>
<line x1="293.5" y1="562" x2="293.5" y2="599.2" stroke="#333" stroke-width="0.7"/>
<polygon points="293.4,575.2 292.09999999999997,570.2 294.7,570.2" fill="#111"/>
<rect x="238.5" y="585.5" width="37" height="5" fill="#f2cf8c" stroke="#e39b1e" stroke-width="1" rx="0"/>
<text x="257.0" y="590.0999999999999" font-size="7.704999999999921" fill="#4b3b1f" text-anchor="middle" font-weight="normal" textLength="35.60000000000002" lengthAdjust="spacingAndGlyphs">.950±.002</text>
<rect x="278.5" y="575.5" width="30" height="12" fill="#f2d394" stroke="#e39b1e" stroke-width="1" rx="0"/>
<rect x="280.5" y="577.5" width="26" height="8" fill="none" stroke="#d9b97a" stroke-width="0.7" rx="0"/>
<text x="293.35" y="584.35" font-size="8.5" fill="#4a3d25" text-anchor="middle" font-weight="normal" >.450</text>
<line x1="444.5" y1="593.4" x2="469.4" y2="618.3" stroke="#555" stroke-width="0.6"/>
<line x1="469.4" y1="618.5" x2="486" y2="618.5" stroke="#555" stroke-width="0.6"/>
<polygon points="444.5,593.4 448.91,595.99 447.09,597.81" fill="#111"/>
<rect x="486.5" y="614.5" width="24" height="8" fill="#f2cf8c" stroke="#e39b1e" stroke-width="1" rx="0"/>
<text x="498.79999999999995" y="621.5" font-size="8.6" fill="#4b3b1f" text-anchor="middle" font-weight="normal" textLength="23.19999999999999" lengthAdjust="spacingAndGlyphs">ø.750</text>
<rect x="467.5" y="623.5" width="92" height="15" fill="#f2d394" stroke="#e39b1e" stroke-width="1" rx="0"/>
<rect x="469.5" y="625.5" width="89" height="12" fill="none" stroke="#d2b27a" stroke-width="0.6" rx="0"/>
<line x1="481.5" y1="625" x2="481.5" y2="637.5" stroke="#c9a868" stroke-width="0.7"/>
<line x1="520.5" y1="625" x2="520.5" y2="637.5" stroke="#c9a868" stroke-width="0.7"/>
<line x1="533.5" y1="625" x2="533.5" y2="637.5" stroke="#c9a868" stroke-width="0.7"/>
<line x1="546.5" y1="625" x2="546.5" y2="637.5" stroke="#c9a868" stroke-width="0.7"/>
<circle cx="475" cy="631.3" r="4" fill="none" stroke="#8a7750" stroke-width="0.6"/>
<line x1="469.5" y1="631.5" x2="480.5" y2="631.5" stroke="#8a7750" stroke-width="0.6"/>
<line x1="475.5" y1="625.5" x2="475.5" y2="637" stroke="#8a7750" stroke-width="0.6"/>
<text x="486.5" y="634.5" font-size="7.5" fill="#8a7750" text-anchor="middle" font-weight="normal" >ø</text>
<text x="499" y="634.5" font-size="8.5" fill="#5a4a30" text-anchor="middle" font-weight="normal" >.01</text>
<circle cx="512" cy="631.3" r="4.5" fill="none" stroke="#6a5a40" stroke-width="0.6"/>
<text x="512" y="634.1" font-size="6.5" fill="#5a4a30" text-anchor="middle" font-weight="normal" >M</text>
<text x="526.5" y="634.5" font-size="8" fill="#5a4a30" text-anchor="middle" font-weight="normal" >A</text>
<text x="539.5" y="634.5" font-size="8" fill="#5a4a30" text-anchor="middle" font-weight="normal" >B</text>
<text x="553" y="634.5" font-size="8" fill="#5a4a30" text-anchor="middle" font-weight="normal" >C</text>
<line x1="552.5" y1="575.5" x2="561" y2="575.5" stroke="#999" stroke-width="0.6"/>
<rect x="561.5" y="562.5" width="43" height="14" fill="#f2d394" stroke="#e39b1e" stroke-width="1" rx="0"/>
<rect x="563.5" y="563.5" width="40" height="12" fill="none" stroke="#d2b27a" stroke-width="0.6" rx="0"/>
<line x1="580.5" y1="563.5" x2="580.5" y2="575.5" stroke="#c9a868" stroke-width="0.7"/>
<polygon points="566,573 570,566 576,566 572,573" fill="none" stroke="#8a7750" stroke-width="0.6"/>
<text x="592.5" y="573" font-size="8.5" fill="#5a4a30" text-anchor="middle" font-weight="normal" >.005</text>
<polygon points="590,577.5 596,577.5 593,582" fill="#111"/>
<line x1="593.5" y1="582" x2="593.5" y2="588.4" stroke="#333" stroke-width="0.7"/>
<rect x="586.5" y="588.5" width="13" height="11" fill="#fff" stroke="#555" stroke-width="0.8" rx="0"/>
<text x="593" y="597.5" font-size="7.5" fill="#111" text-anchor="middle" font-weight="normal" >A</text>
<rect x="622.5" y="559.5" width="209" height="99" fill="none" stroke="#777" stroke-width="0.8" rx="0"/>
<line x1="692.5" y1="559.2" x2="692.5" y2="659.4" stroke="#777" stroke-width="0.8"/>
<line x1="622.4" y1="567.5" x2="692.6" y2="567.5" stroke="#777" stroke-width="0.7"/>
<line x1="622.4" y1="608.5" x2="692.6" y2="608.5" stroke="#777" stroke-width="0.7"/>
<line x1="622.4" y1="622.5" x2="692.6" y2="622.5" stroke="#777" stroke-width="0.7"/>
<line x1="622.4" y1="635.5" x2="692.6" y2="635.5" stroke="#777" stroke-width="0.7"/>
<line x1="622.4" y1="648.5" x2="692.6" y2="648.5" stroke="#777" stroke-width="0.7"/>
<line x1="692.6" y1="578.5" x2="831.5" y2="578.5" stroke="#777" stroke-width="0.7"/>
<line x1="692.6" y1="622.5" x2="831.5" y2="622.5" stroke="#777" stroke-width="0.7"/>
<line x1="692.6" y1="648.5" x2="831.5" y2="648.5" stroke="#777" stroke-width="0.7"/>
<line x1="712.5" y1="622.3" x2="712.5" y2="648.5" stroke="#777" stroke-width="0.7"/>
<line x1="802.5" y1="622.3" x2="802.5" y2="648.5" stroke="#777" stroke-width="0.7"/>
<line x1="733.5" y1="648.5" x2="733.5" y2="659.4" stroke="#777" stroke-width="0.7"/>
<line x1="782.5" y1="648.5" x2="782.5" y2="659.4" stroke="#777" stroke-width="0.7"/>
<text x="624" y="565.8" font-size="4.6" fill="#111" text-anchor="start" font-weight="normal" >UNLESS OTHERWISE SPECIFIED:</text>
<text x="624" y="576.5" font-size="3.8" fill="#222" text-anchor="start" font-weight="bold" >DIMENSIONS ARE IN INCHES</text>
<text x="624" y="581" font-size="3.8" fill="#222" text-anchor="start" font-weight="bold" >TOLERANCES:</text>
<text x="624" y="586" font-size="3.8" fill="#222" text-anchor="start" font-weight="bold" >FRACTIONAL: 1/64</text>
<text x="624" y="591.5" font-size="3.8" fill="#222" text-anchor="start" font-weight="bold" >ANGULAR: MACH .5° BEND .5°</text>
<text x="624" y="596.5" font-size="3.8" fill="#222" text-anchor="start" font-weight="bold" >TWO PLACE DECIMAL   .03</text>
<text x="624" y="601.5" font-size="3.8" fill="#222" text-anchor="start" font-weight="bold" >THREE PLACE DECIMAL  .01</text>
<text x="624" y="613.5" font-size="3.2" fill="#222" text-anchor="start" font-weight="bold" >INTERPRET GEOMETRIC</text>
<text x="624" y="617.5" font-size="3.2" fill="#222" text-anchor="start" font-weight="bold" >TOLERANCING PER ASME Y14.5M-1994</text>
<text x="623.5" y="625.5" font-size="3.2" fill="#222" text-anchor="start" font-weight="bold" >MATERIAL</text>
<text x="644" y="630" font-size="5.4" fill="#111" text-anchor="start" font-weight="normal" >ALUMINIUM</text>
<text x="623.5" y="638.5" font-size="3.2" fill="#222" text-anchor="start" font-weight="bold" >FINISH</text>
<path d="M651,644 L653,646 L656,639 L662,639" fill="none" stroke="#333" stroke-width="0.6"/>
<text x="656" y="645" font-size="3" fill="#222" text-anchor="start" font-weight="normal" >125</text>
<text x="657.5" y="655.5" font-size="3.8" fill="#222" text-anchor="middle" font-weight="bold" >DO NOT SCALE DRAWING</text>
<text x="694.5" y="585.5" font-size="6" fill="#111" text-anchor="start" font-weight="normal" >TITLE:</text>
<text x="763" y="609" font-size="16.5" fill="#111" text-anchor="middle" font-weight="normal" >Bsbsolid</text>
<text x="695.5" y="630" font-size="6.6" fill="#222" text-anchor="start" font-weight="normal" >SIZE</text>
<text x="702.5" y="645" font-size="14" fill="#000" text-anchor="middle" font-weight="bold" >B</text>
<text x="713.5" y="630" font-size="6.6" fill="#222" text-anchor="start" font-weight="normal" >DWG.  NO.</text>
<text x="755" y="641.5" font-size="8.2" fill="#111" text-anchor="middle" font-weight="normal" >0001</text>
<text x="810" y="630" font-size="6.6" fill="#222" text-anchor="start" font-weight="normal" >REV</text>
<text x="817" y="641.5" font-size="8.2" fill="#111" text-anchor="middle" font-weight="normal" >NC</text>
<text x="696" y="657" font-size="6.4" fill="#111" text-anchor="start" font-weight="normal" >SCALE: 1:2</text>
<text x="734.5" y="657" font-size="6.2" fill="#111" text-anchor="start" font-weight="normal" >WEIGHT:</text>
<text x="786.5" y="657" font-size="6" fill="#111" text-anchor="start" font-weight="normal" >SHEET 1 OF 1</text>
<defs><linearGradient id="hole" x1="0" y1="0" x2="1" y2="1"><stop offset="0" stop-color="#54576a"/><stop offset="0.5" stop-color="#f2f2f6"/><stop offset="1" stop-color="#6a6d80"/></linearGradient><linearGradient id="hole2" x1="0" y1="0" x2="1" y2="0.3"><stop offset="0" stop-color="#fff"/><stop offset="1" stop-color="#dcdce4"/></linearGradient><linearGradient id="endf" x1="0" y1="0" x2="1" y2="0"><stop offset="0" stop-color="#8c8fa2"/><stop offset="0.5" stop-color="#c4c6d2"/><stop offset="1" stop-color="#7d8092"/></linearGradient></defs>
<polygon points="805,210.8 812.5,213 812.5,267.8 807,269.5 805,266" fill="#6f7284" stroke="#2e2e3a" stroke-width="0.5"/>
<polygon points="697.7,164.7 719.5,170.3 789.4,209 798,213 807,227.3 807,266 798.7,270.6 697.7,212.6" fill="#7a7d8f" stroke="#2e2e3a" stroke-width="0.6"/>
<polygon points="697.7,164.7 705.6,158.3 727.8,163.8 797.7,205.2 789.4,209 719.5,170.3" fill="#9b9eb0" stroke="#2e2e3a" stroke-width="0.5"/>
<line x1="719.5" y1="170.3" x2="727.8" y2="163.8" stroke="#2e2e3a" stroke-width="0.5"/>
<path d="M789.4,209 Q800,204 805,212 Q808,218 807,227.3 L807,266 L798.7,270.6 L798.7,229 Q800,216 789.4,209 Z" fill="url(#endf)" stroke="#2e2e3a" stroke-width="0.5"/>
<ellipse cx="706.9" cy="176.7" rx="5.2" ry="7.2" transform="rotate(-25 706.9 176.7)" fill="url(#hole)" stroke="#2e2e3a" stroke-width="0.5"/>
<ellipse cx="706.9" cy="204.3" rx="5.2" ry="7.2" transform="rotate(-25 706.9 204.3)" fill="url(#hole)" stroke="#2e2e3a" stroke-width="0.5"/>
<ellipse cx="790.4" cy="224.6" rx="5" ry="7" transform="rotate(-25 790.4 224.6)" fill="url(#hole)" stroke="#2e2e3a" stroke-width="0.5"/>
<ellipse cx="790.4" cy="252.2" rx="5" ry="7" transform="rotate(-25 790.4 252.2)" fill="url(#hole)" stroke="#2e2e3a" stroke-width="0.5"/>
<ellipse cx="767.3" cy="208" rx="4.6" ry="6" transform="rotate(-25 767.3 208)" fill="url(#hole)" stroke="#2e2e3a" stroke-width="0.5"/>
<rect x="718.6" y="185" width="9" height="33" rx="4.5" fill="url(#hole)" stroke="#2e2e3a" stroke-width="0.5" transform="rotate(-12 723 201.6)"/>
<ellipse cx="748.9" cy="212.6" rx="15" ry="21" transform="rotate(-22 748.9 212.6)" fill="#8e91a3" stroke="#2e2e3a" stroke-width="0.6"/>
<ellipse cx="751" cy="211.5" rx="11" ry="17" transform="rotate(-22 751 211.5)" fill="#6c6f81" stroke="#2e2e3a" stroke-width="0.5"/>
<ellipse cx="753.5" cy="210.8" rx="8" ry="13" transform="rotate(-22 753.5 210.8)" fill="url(#hole2)" stroke="#2e2e3a" stroke-width="0.5"/>
<ellipse cx="778.4" cy="218.1" rx="1.8" ry="2.2" fill="#e6e6ec" stroke="#2e2e3a" stroke-width="0.4"/>
<ellipse cx="767.3" cy="225.5" rx="1.8" ry="2.2" fill="#e6e6ec" stroke="#2e2e3a" stroke-width="0.4"/>
<ellipse cx="778.4" cy="232" rx="1.8" ry="2.2" fill="#e6e6ec" stroke="#2e2e3a" stroke-width="0.4"/>
<ellipse cx="790.4" cy="238.4" rx="1.8" ry="2.2" fill="#e6e6ec" stroke="#2e2e3a" stroke-width="0.4"/>
<ellipse cx="778.4" cy="245.8" rx="1.8" ry="2.2" fill="#e6e6ec" stroke="#2e2e3a" stroke-width="0.4"/>
<circle cx="748" cy="234.7" r="1.3" fill="#ddd" stroke="#2e2e3a" stroke-width="0.3"/>
<ellipse cx="753.5" cy="183.1" rx="5.5" ry="3.4" transform="rotate(10 753.5 183.1)" fill="#7f8294" stroke="#2e2e3a" stroke-width="0.5"/>
</svg>
<div id="pop" class="abs">
  <div class="abs l1">True Position &lt;= .03 in</div>
  <div class="abs l2">|<svg style="display:inline-block;vertical-align:-0.5px" width="8" height="10" viewBox="0 0 8 10"><path d="M4,2 L7,5.2 L4,8.4 L1,5.2 Z" fill="none" stroke="#333" stroke-width="0.9"/><path d="M4,0.8 V9.6 M0.5,5.2 H7.5" stroke="#333" stroke-width="0.9"/></svg>|<svg style="display:inline-block;vertical-align:-1px" width="8" height="10" viewBox="0 0 8 10"><circle cx="4" cy="5.2" r="3.2" fill="none" stroke="#333" stroke-width="1.1"/><path d="M0.5,9.5 L7.5,1" stroke="#333" stroke-width="1.1"/></svg>.03<svg style="display:inline-block;vertical-align:-2.5px" width="11.5" height="12" viewBox="0 0 11.5 12"><circle cx="5.75" cy="6" r="5.2" fill="none" stroke="#333" stroke-width="0.9"/><path d="M3.2,8.8 V3.4 L5.75,7.6 L8.3,3.4 V8.8" fill="none" stroke="#333" stroke-width="1"/></svg>|A|B|C|</div>
  <div class="abs l3">Diameter, At maximum material condition , Reference Datum A B C</div>
  <div class="abs inp"><span>[[ <svg style="display:inline-block;vertical-align:-0.5px" width="8" height="10" viewBox="0 0 8 10"><path d="M4,2 L7,5.2 L4,8.4 L1,5.2 Z" fill="none" stroke="#333" stroke-width="0.9"/><path d="M4,0.8 V9.6 M0.5,5.2 H7.5" stroke="#333" stroke-width="0.9"/></svg> || <svg style="display:inline-block;vertical-align:-1px" width="8" height="10" viewBox="0 0 8 10"><circle cx="4" cy="5.2" r="3.2" fill="none" stroke="#333" stroke-width="1.1"/><path d="M0.5,9.5 L7.5,1" stroke="#333" stroke-width="1.1"/></svg>.03<svg style="display:inline-block;vertical-align:-2.5px" width="11.5" height="12" viewBox="0 0 11.5 12"><circle cx="5.75" cy="6" r="5.2" fill="none" stroke="#333" stroke-width="0.9"/><path d="M3.2,8.8 V3.4 L5.75,7.6 L8.3,3.4 V8.8" fill="none" stroke="#333" stroke-width="1"/></svg> || A || B || C]]</span></div>
  <div class="btn" style="left:4px;width:30px"><svg class="abs" style="left:7px;top:4px" width="15" height="11" viewBox="0 0 15 11"><rect x="0.5" y="0.5" width="14" height="9" fill="none" stroke="#333" stroke-width="1"/><path d="M2,2.5 H13 M2,4.5 H13 M2,6.5 H13 M4,8.3 H11" stroke="#333" stroke-width="0.9" stroke-dasharray="1,0.8"/></svg></div>
  <div class="btn" style="left:247px;width:40px"><span class="abs" style="left:6px;top:3px;font-size:10.5px;color:#333">NOTE</span></div>
  <div class="btn" style="left:297px;width:27px"><svg class="abs" style="left:7px;top:4px" width="12" height="11" viewBox="0 0 12 11"><path d="M1,6 L4.5,9 L11,1.5" fill="none" stroke="#333" stroke-width="1.2"/></svg></div>
  <div class="btn" style="left:334px;width:28px"><svg class="abs" style="left:7px;top:3px" width="14" height="14" viewBox="0 0 14 14"><circle cx="7" cy="7" r="5.6" fill="none" stroke="#333" stroke-width="1.2"/><path d="M3,3 L11,11" stroke="#333" stroke-width="1.2"/></svg></div>
</div>
<svg class="abs" style="left:0;top:0" width="1363" height="706" viewBox="0 0 1363 706"><polygon points="595,429.2 609.2,416.2 623,429.2" fill="rgb(251,251,251)"/><polyline points="596.5,428.2 609.2,416.2 622,428.2" fill="none" stroke="#e5a548" stroke-width="1.5"/></svg>
</body></html>
